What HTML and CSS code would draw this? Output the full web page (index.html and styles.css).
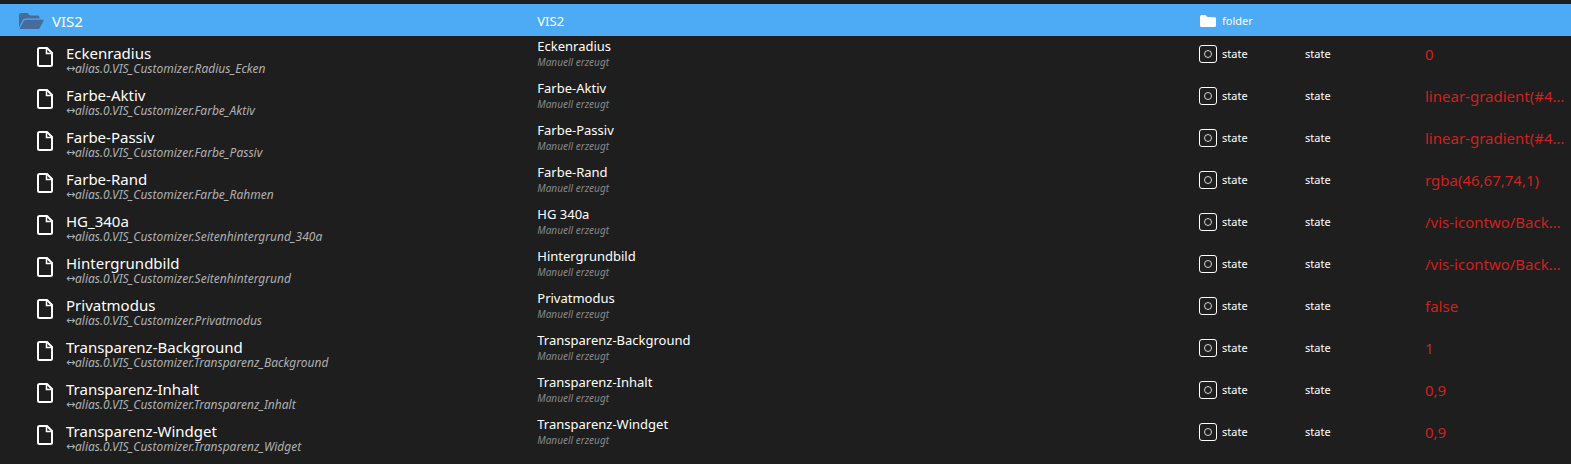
FILE: index.html
```html
<!DOCTYPE html>
<html lang="de">
<head>
    <meta charset="UTF-8">
    <meta name="viewport" content="width=device-width, initial-scale=1.0">
    <title>VIS2</title>
    <link rel="stylesheet" href="styles.css">
</head>
<body>
    <svg class="symbols" aria-hidden="true">
        <symbol id="icon-open" viewBox="0 0 26 18">
            <path d="M1 15.500V3Q1 1 3 1h6.500l2.500 2.500h7.500q2 0 2 2v1H8Q5.500 6.500 4.500 8.500z"/>
            <path d="M8 7.800h17.200q.8 0 .4.900l-3.800 7.200q-.5 1-1.600 1H2.300q-.9 0-.4-.9l4-7.200q.6-1 2.100-1z"/>
        </symbol>
        <symbol id="icon-file" viewBox="0 0 16 20">
            <path d="M2.500 1H10l5 5v11.500q0 1.500-1.500 1.500h-11Q1 19 1 17.500v-15Q1 1 2.500 1z" fill="none" stroke="currentColor" stroke-width="2"/>
            <path d="M9.500 1v5.500H15" fill="none" stroke="currentColor" stroke-width="1.500"/>
        </symbol>
        <symbol id="icon-folder" viewBox="0 0 18 14">
            <path d="M2.500 1h4l2 2h7q1.500 0 1.500 1.500v7q0 1.500-1.500 1.500h-13Q1 13 1 11.500v-9Q1 1 2.500 1z"/>
        </symbol>
        <symbol id="icon-state" viewBox="0 0 18 18">
            <rect x=".5" y=".5" width="17" height="17" rx="2.500" fill="none" stroke="currentColor"/>
            <circle cx="9" cy="9" r="3.500" fill="none" stroke="currentColor" stroke-opacity=".8"/>
        </symbol>
    </svg>

    <table class="objects">
        <colgroup>
            <col class="col-id">
            <col class="col-name">
            <col class="col-type">
            <col class="col-role">
            <col class="col-value">
        </colgroup>
        <tbody id="rows">
            <tr class="folder selected">
                <td><div class="item"><svg class="open"><use href="#icon-open"/></svg><span class="id">VIS2</span></div></td>
                <td><div class="name">VIS2</div></td>
                <td><div class="type"><svg class="type-icon"><use href="#icon-folder"/></svg>folder</div></td>
                <td></td>
                <td></td>
            </tr>
        </tbody>
        <tbody>
            <tr class="folder next">
                <td><div class="item"><svg class="open"><use href="#icon-open"/></svg></div></td>
                <td></td>
                <td></td>
                <td></td>
                <td></td>
            </tr>
        </tbody>
    </table>

    <script src="script.js"></script>
</body>
</html>
```
FILE: styles.css
```css
:root {
    --background: #1e1e1e;
    --selected: #4dabf5;
    --folder: #456c9b;
    --value: #d02020;
}

* {
    margin: 0;
    padding: 0;
    box-sizing: border-box;
}

body {
    font-family: "Noto Sans", "Open Sans", sans-serif;
    background-color: var(--background);
    color: #fff;
    height: 100vh;
    padding-top: 4px;
    overflow: hidden;
}

.symbols {
    position: absolute;
    width: 0;
    height: 0;
}

.objects {
    width: 100%;
    table-layout: fixed;
    border-collapse: collapse;
}

.col-id {
    width: 34.200%;
}

.col-type {
    width: 106px;
}

.col-role {
    width: 120px;
}

.col-value {
    width: 146px;
}

.objects td {
    height: 42px;
    vertical-align: middle;
    white-space: nowrap;
    overflow: hidden;
}

.objects .folder td {
    height: 32px;
    padding-top: 1px;
}

.selected {
    background-color: var(--selected);
}

.item {
    display: flex;
    align-items: center;
    gap: 13px;
    padding-left: 37px;
}

.folder .item {
    gap: 8px;
    padding-left: 18px;
}

.open {
    width: 26px;
    height: 18px;
    fill: var(--folder);
}

.next .open {
    opacity: 0.500;
}

.file {
    width: 16px;
    height: 20px;
}

.labels {
    padding-top: 6px;
}

.id {
    display: block;
    font-size: 15px;
    line-height: 18px;
}

.alias {
    display: flex;
    align-items: center;
    font-size: 12px;
    font-style: italic;
    line-height: 14px;
    color: #b0b0b0;
}

.arrow {
    width: 9px;
    font-family: "DejaVu Sans", sans-serif;
    font-size: 11px;
    font-style: normal;
}

.name {
    font-size: 13px;
    line-height: 18px;
}

.objects .name-cell {
    vertical-align: top;
    padding-top: 1px;
}

.origin {
    font-size: 10px;
    font-style: italic;
    line-height: 14px;
    color: #888;
}

.objects .data-cell {
    padding-bottom: 7px;
}

.type {
    display: flex;
    align-items: center;
    gap: 5px;
}

.type,
.role {
    font-size: 11px;
    line-height: 16px;
}

.type-icon {
    width: 18px;
    height: 18px;
    fill: currentColor;
}

.folder .type-icon {
    height: 14px;
}

.value {
    font-size: 15px;
    line-height: 20px;
    color: var(--value);
}
```
FILE: script.js
```js
const states = [
    { id: "Eckenradius", alias: "Radius_Ecken", value: "0" },
    { id: "Farbe-Aktiv", alias: "Farbe_Aktiv", value: "linear-gradient(#4…" },
    { id: "Farbe-Passiv", alias: "Farbe_Passiv", value: "linear-gradient(#4…" },
    { id: "Farbe-Rand", alias: "Farbe_Rahmen", value: "rgba(46,67,74,1)" },
    { id: "HG_340a", name: "HG 340a", alias: "Seitenhintergrund_340a", value: "/vis-icontwo/Back…" },
    { id: "Hintergrundbild", alias: "Seitenhintergrund", value: "/vis-icontwo/Back…" },
    { id: "Privatmodus", alias: "Privatmodus", value: "false" },
    { id: "Transparenz-Background", alias: "Transparenz_Background", value: "1" },
    { id: "Transparenz-Inhalt", alias: "Transparenz_Inhalt", value: "0,9" },
    { id: "Transparenz-Windget", alias: "Transparenz_Widget", value: "0,9" }
];

const rows = document.getElementById("rows");

states.forEach(function (state) {
    rows.insertAdjacentHTML("beforeend", `
        <tr>
            <td><div class="item">
                <svg class="file"><use href="#icon-file"/></svg>
                <div class="labels">
                    <span class="id">${state.id}</span>
                    <span class="alias"><span class="arrow">↔</span>alias.0.VIS_Customizer.${state.alias}</span>
                </div>
            </div></td>
            <td class="name-cell"><div class="name">${state.name || state.id}</div><div class="origin">Manuell erzeugt</div></td>
            <td class="data-cell"><div class="type"><svg class="type-icon"><use href="#icon-state"/></svg>state</div></td>
            <td class="data-cell role">state</td>
            <td class="data-cell value">${state.value}</td>
        </tr>`);
});
```
